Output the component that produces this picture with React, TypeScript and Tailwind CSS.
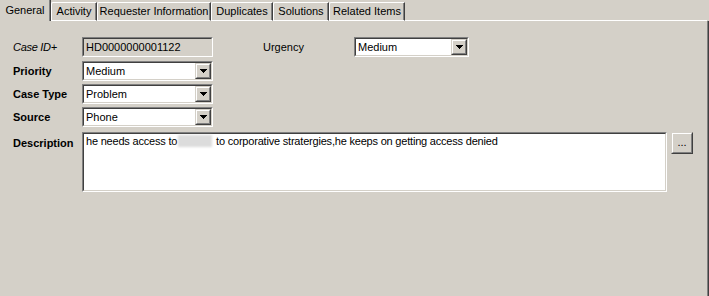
import clsx from "clsx";

const tabs = [
  { label: "General", w: "w-[51px]", active: true },
  { label: "Activity", w: "w-[46px]" },
  { label: "Requester Information", w: "w-[114px]" },
  { label: "Duplicates", w: "w-[62px]" },
  { label: "Solutions", w: "w-[56px]" },
  { label: "Related Items", w: "w-[76px]" },
];

function Sunken({ className, inner, children }: { className?: string; inner?: string; children?: React.ReactNode }) {
  return (
    <div className={clsx("border border-t-[#808080] border-l-[#808080] border-b-white border-r-white", className)}>
      <div className={clsx("h-full border border-t-[#404040] border-l-[#404040] border-b-[#d4d0c8] border-r-[#d4d0c8]", inner)}>
        {children}
      </div>
    </div>
  );
}

function Raised({ className, children }: { className?: string; children?: React.ReactNode }) {
  return (
    <div className={clsx("border border-t-[#d4d0c8] border-l-[#d4d0c8] border-b-[#404040] border-r-[#404040] bg-[#d4d0c8]", className)}>
      <div className="flex h-full items-center justify-center border border-t-white border-l-white border-b-[#808080] border-r-[#808080]">
        {children}
      </div>
    </div>
  );
}

function Combo({ value, w }: { value: string; w: string }) {
  return (
    <Sunken className={clsx("h-[20px]", w)} inner="flex bg-white">
      <span className="flex-1 pl-[2px] leading-[16px]">{value}</span>
      <Raised className="h-[16px] w-[16px]">
        <svg width="7" height="4" viewBox="0 0 7 4">
          <path d="M0 0h7v1H0zM1 1h5v1H1zM2 2h3v1H2zM3 3h1v1H3z" fill="#000" />
        </svg>
      </Raised>
    </Sunken>
  );
}

export default function App() {
  return (
    <div
      className="flex h-[296px] w-[709px] flex-col bg-[#d4d0c8] text-[11px] text-black"
      style={{ fontFamily: '"Liberation Sans", Arial, sans-serif' }}
    >
      {/* tab strip */}
      <div className="flex h-[21px] items-start">
        {tabs.map((t) =>
          t.active ? (
            <div
              key={t.label}
              className={clsx("flex h-[21px] items-center justify-center border-r border-r-[#404040] pb-[1px] shadow-[inset_-1px_0_0_#808080]", t.w)}
            >
              {t.label}
            </div>
          ) : (
            <div
              key={t.label}
              className={clsx(
                "mt-[2px] flex h-[19px] items-center justify-center rounded-tl-[2px] border-t border-l border-b border-t-white border-l-white border-b-white border-r border-r-[#404040] shadow-[inset_-1px_0_0_#808080]",
                t.w
              )}
            >
              {t.label}
            </div>
          )
        )}
        <div className="h-[21px] flex-1 border-b border-b-white" />
        <div className="h-[21px] w-[2px]" />
      </div>

      {/* panel */}
      <div className="flex flex-1 flex-col border-r border-r-[#404040] pl-[13px] pt-[16px] shadow-[inset_-1px_0_0_#808080]">
        <div className="flex h-[20px] items-center">
          <span className="w-[69px] italic tracking-[-0.3px]">Case ID+</span>
          <Sunken className="h-[20px] w-[131px]" inner="bg-[#d4d0c8] pl-[2px] leading-[16px]">
            HD0000000001122
          </Sunken>
          <span className="ml-[50px] w-[91px]">Urgency</span>
          <Combo value="Medium" w="w-[115px]" />
        </div>

        <div className="mt-[4px] flex h-[20px] items-center">
          <span className="w-[69px] font-bold">Priority</span>
          <Combo value="Medium" w="w-[131px]" />
        </div>
        <div className="mt-[3px] flex h-[20px] items-center">
          <span className="w-[69px] font-bold">Case Type</span>
          <Combo value="Problem" w="w-[131px]" />
        </div>
        <div className="mt-[3px] flex h-[20px] items-center">
          <span className="w-[69px] font-bold">Source</span>
          <Combo value="Phone" w="w-[131px]" />
        </div>

        <div className="mt-[5px] flex items-start">
          <span className="w-[69px] pt-[3px] font-bold">Description</span>
          <Sunken className="h-[60px] w-[585px]" inner="bg-white px-[2px] pt-0 leading-[14px] tracking-[-0.2px]">
            he needs access to
            <span className="mx-[1px] inline-block h-[12px] w-[34px] bg-[#dcdcdc] align-[-2px] blur-[1px]" />
            {" "}to corporative stratergies,he keeps on getting access denied
          </Sunken>
          <Raised className="ml-[4px] h-[22px] w-[22px]">
            <span className="pb-[2px] leading-none">...</span>
          </Raised>
        </div>
      </div>
    </div>
  );
}
